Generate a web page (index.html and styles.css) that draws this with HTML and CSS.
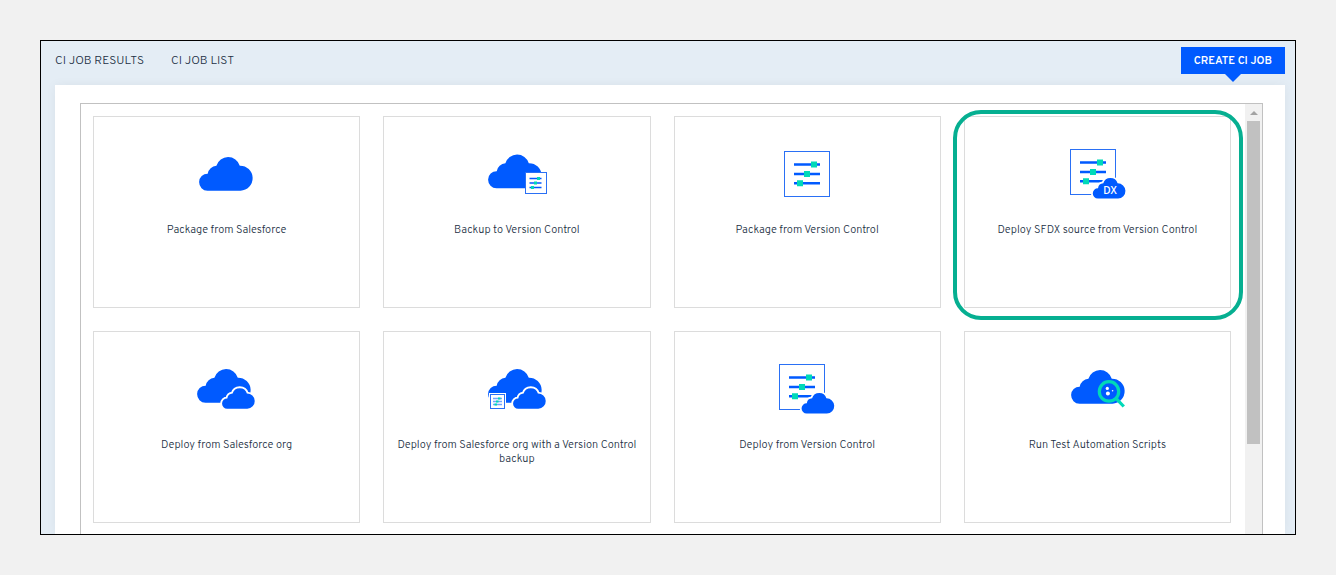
FILE: index.html
```html
<!DOCTYPE html>
<html lang="en">
<head>
<meta charset="utf-8">
<title>CI Jobs</title>
<link rel="stylesheet" href="styles.css">
</head>
<body>
<svg class="defs" aria-hidden="true">
  <defs>
    <path id="cloud" d="M8.5 33.7A8.5 8.5 0 0 1 8.7 16.7A9.4 9.4 0 0 1 17.4 8.8A12.2 12.2 0 0 1 40.8 8.7A12.5 12.5 0 0 1 41.5 33.7Z"/>
    <g id="sheet">
      <rect class="paper" x=".5" y=".5" width="45" height="45"/>
      <path class="rail" d="M10 13.5h26M10 23h26M10 32.2h26"/>
      <path class="knob" d="M27 10.5h6v6h-6zM20 20h6v6h-6zM13 29.2h6v6h-6z"/>
    </g>
  </defs>
</svg>
<div class="app">
  <header class="bar">
    <nav class="tabs">
      <a class="tab" href="#results">CI JOB RESULTS</a>
      <a class="tab" href="#list">CI JOB LIST</a>
    </nav>
    <button class="create" type="button">CREATE CI JOB</button>
  </header>
  <main class="panel">
    <div class="scroller">
      <div class="grid">
        <button class="card" type="button">
          <svg class="icon" viewBox="0 0 80 60"><use class="cloud" href="#cloud" x="12" y="10"/></svg>
          <span class="label">Package from Salesforce</span>
        </button>
        <button class="card" type="button">
          <svg class="icon" viewBox="0 0 80 60">
            <use class="cloud" href="#cloud" x="11" y="7.5"/>
            <rect class="paper" x="48.5" y="25.5" width="21" height="21"/>
            <path class="rail thin" d="M52.5 31.5h12M52.5 36h12M52.5 40.5h12"/>
            <path class="knob" d="M60 30h3v3h-3zM57 34.5h3v3h-3zM54 39h3v3h-3z"/>
          </svg>
          <span class="label">Backup to Version Control</span>
        </button>
        <button class="card" type="button">
          <svg class="icon" viewBox="0 0 80 60"><use href="#sheet" x="17" y="4"/></svg>
          <span class="label">Package from Version Control</span>
        </button>
        <button class="card selected" type="button">
          <svg class="icon" viewBox="0 0 80 60">
            <use href="#sheet" x="13" y="2"/>
            <use class="cloud cut" href="#cloud" transform="translate(35.7 31) scale(.61)"/>
            <text class="dx" x="53" y="46.5">DX</text>
          </svg>
          <span class="label">Deploy SFDX source from Version Control</span>
        </button>
        <button class="card" type="button">
          <svg class="icon" viewBox="0 0 80 60">
            <use class="cloud" href="#cloud" x="10" y="7"/>
            <use class="cloud cut" href="#cloud" transform="translate(35 26.2) scale(.61)"/>
          </svg>
          <span class="label">Deploy from Salesforce org</span>
        </button>
        <button class="card" type="button">
          <svg class="icon" viewBox="0 0 80 60">
            <use class="cloud" href="#cloud" x="11" y="7"/>
            <use class="cloud cut" href="#cloud" transform="translate(36 26.2) scale(.61)"/>
            <path class="gap" d="M12 31h17v17h-17z"/>
            <rect class="paper" x="13.5" y="32.5" width="14" height="14"/>
            <path class="rail thin faint" d="M16 36.5h9M16 39.5h9M16 42.5h9"/>
            <path class="knob" d="M21 35.5h2.5v2h-2.5zM19 38.5h2.5v2h-2.5zM17.5 41.5h2.5v2h-2.5z"/>
          </svg>
          <span class="label">Deploy from Salesforce org with a Version Control backup</span>
        </button>
        <button class="card" type="button">
          <svg class="icon" viewBox="0 0 80 60">
            <use href="#sheet" x="12" y="2"/>
            <use class="cloud cut" href="#cloud" transform="translate(34.5 31) scale(.61)"/>
          </svg>
          <span class="label">Deploy from Version Control</span>
        </button>
        <button class="card" type="button">
          <svg class="icon" viewBox="0 0 80 60">
            <use class="cloud" href="#cloud" x="14" y="8"/>
            <path class="lens" d="M59 36.4L66.8 44.5"/>
            <circle class="lens" cx="52" cy="29.4" r="9.7"/>
            <g class="dots"><circle cx="50.3" cy="26.4" r="1.6"/><circle cx="50.9" cy="31.6" r="2"/><circle cx="55.6" cy="28.8" r=".8"/></g>
          </svg>
          <span class="label">Run Test Automation Scripts</span>
        </button>
      </div>
      <div class="track" aria-hidden="true"><div class="up"></div><div class="thumb"></div></div>
    </div>
  </main>
</div>
</body>
</html>
```
FILE: styles.css
```css
* { box-sizing: border-box; }

body {
  margin: 0;
  padding: 40px;
  height: 100vh;
  background: #f1f1f1;
  font-family: Overpass, Roboto, "Noto Sans", sans-serif;
  color: #1c3044;
}

button {
  font: inherit;
  color: inherit;
  border: 0;
  cursor: pointer;
}

.defs { position: absolute; width: 0; height: 0; }

.app {
  display: flex;
  flex-direction: column;
  height: 100%;
  padding: 0 10px 0 14px;
  border: 1px solid #000;
  background: #e4edf5;
  overflow: hidden;
}

.bar {
  display: flex;
  justify-content: space-between;
  align-items: flex-start;
  height: 44px;
  padding-top: 6px;
  flex: none;
}

.tabs { display: flex; gap: 27px; }

.tab {
  font-size: 12px;
  font-weight: 300;
  line-height: 28px;
  color: inherit;
  text-decoration: none;
}

.create {
  position: relative;
  padding: 0 13px;
  height: 27px;
  background: #005aff;
  color: #fff;
  font-size: 11px;
  font-weight: 600;
  line-height: 26px;
}

.create::after {
  content: "";
  position: absolute;
  top: 100%;
  left: 50%;
  margin-left: -8px;
  border: 8px solid transparent;
  border-top-color: #005aff;
  border-bottom: 0;
}

.panel {
  display: flex;
  flex: 1;
  min-height: 0;
  padding: 18px 22px 0 25px;
  background: #fff;
  box-shadow: 0 0 10px rgba(0, 0, 0, .05);
}

.scroller {
  display: flex;
  flex: 1;
  border: 1px solid #c1c1c1;
  border-bottom: 0;
  overflow: hidden;
}

.grid {
  display: grid;
  flex: 1;
  grid-template-columns: repeat(4, minmax(0, 1fr));
  grid-auto-rows: 192px;
  gap: 23px;
  padding: 12px 14px 12px 12px;
}

.card {
  position: relative;
  display: flex;
  flex-direction: column;
  align-items: center;
  gap: 16px;
  padding: 30px 8px 0;
  border: 1px solid #dcdcdc;
  background: #fff;
}

.selected::after {
  content: "";
  position: absolute;
  inset: -7px -13px -13px -12px;
  border: 4px solid #06af91;
  border-radius: 28px;
}

.icon { width: 80px; height: 60px; flex: none; }

.label {
  font-size: 11px;
  font-weight: 300;
  line-height: 14px;
  text-align: center;
}

.cloud { fill: #005aff; }
.cut { stroke: #fff; stroke-width: 6px; paint-order: stroke; }
.paper { fill: #fff; stroke: #2a70f5; stroke-width: 1px; }
.rail { fill: none; stroke: #005aff; stroke-width: 2.5px; }
.thin { stroke-width: 1.5px; }
.faint { stroke: #73a5ff; }
.knob { fill: #00d9b8; }
.gap { fill: #fff; }
.lens { fill: none; stroke: #00d9b8; stroke-width: 3.2px; }
.dots { fill: #fff; }
.dx {
  fill: #fff;
  font: 600 10px "Open Sans", sans-serif;
  text-anchor: middle;
}

.track {
  display: flex;
  flex-direction: column;
  align-items: center;
  width: 17px;
  flex: none;
  background: #f1f1f1;
}

.up {
  height: 17px;
  flex: none;
  padding-top: 7px;
}

.up::before {
  content: "";
  display: block;
  border: 4px solid transparent;
  border-top: 0;
  border-bottom-color: #a3a3a3;
}

.thumb {
  width: 13px;
  height: 323px;
  flex: none;
  background: #c1c1c1;
}
```
